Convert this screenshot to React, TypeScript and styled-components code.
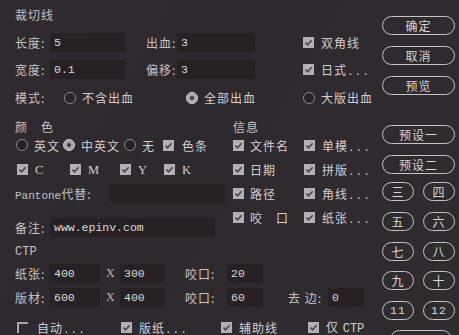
import React from "react";
import styled, { createGlobalStyle } from "styled-components";

const Global = createGlobalStyle`
  html, body { margin: 0; padding: 0; background: #2f2a2f; overflow: hidden; }
  body {
    font-family: "Noto Sans CJK SC", "Noto Sans", sans-serif;
    font-size: 12px;
    color: #cdc9cd;
  }
  * { box-sizing: border-box; }
`;

const Window = styled.div`
  width: 459px;
  height: 335px;
  display: flex;
  overflow: hidden;
  background: linear-gradient(120deg, #312b31 0%, #2e292e 40%, #2f2c30 100%);
`;

const LeftPanel = styled.div`
  width: 382px;
  flex-shrink: 0;
  padding: 6px 0 0 15px;
  display: flex;
  flex-direction: column;
`;

const Title = styled.div`
  height: 18px;
  line-height: 18px;
  letter-spacing: 1px;
  color: #c4c0c4;
`;

const Row = styled.div<{ $mt: number; $h?: number; $pl?: number }>`
  display: flex;
  align-items: center;
  margin-top: ${(p) => p.$mt}px;
  height: ${(p) => p.$h ?? 19}px;
  padding-left: ${(p) => p.$pl ?? 0}px;
  flex-shrink: 0;
`;

const Label = styled.span<{ $w?: number }>`
  width: ${(p) => (p.$w ? `${p.$w}px` : "auto")};
  flex-shrink: 0;
  white-space: nowrap;
  letter-spacing: 1px;
  color: #c6c2c6;
`;

const Mono = styled.span<{ $size?: number }>`
  font-family: "Liberation Mono", monospace;
  font-size: ${(p) => p.$size ?? 11}px;
  letter-spacing: 0;
`;

const Dots = styled.span`
  font-family: "Liberation Mono", monospace;
  font-size: 11px;
  letter-spacing: 1px;
`;

const Gap = styled.span<{ $w: number }>`
  width: ${(p) => p.$w}px;
  flex-shrink: 0;
`;

const Field = styled.div<{ $w: number }>`
  width: ${(p) => p.$w}px;
  height: 19px;
  flex-shrink: 0;
  background: #272125;
  display: flex;
  align-items: center;
  padding-left: 4px;
  font-family: "Liberation Mono", monospace;
  font-size: 11.5px;
  color: #dcd8dc;
`;

const XMark = styled.span`
  width: 20px;
  flex-shrink: 0;
  padding-left: 6px;
  font-family: "Liberation Serif", serif;
  font-size: 12px;
  color: #b9b5b9;
`;

const Option = styled.span<{ $w?: number; $gap?: number }>`
  display: inline-flex;
  align-items: center;
  gap: ${(p) => p.$gap ?? 6}px;
  width: ${(p) => (p.$w ? `${p.$w}px` : "auto")};
  flex-shrink: 0;
  white-space: nowrap;
  letter-spacing: 1px;
  color: #d2ced2;
`;

const Serif = styled.span`
  font-family: "Liberation Serif", serif;
  font-size: 12.5px;
`;

const Box = styled.span<{ $on?: boolean }>`
  width: 11px;
  height: 11px;
  flex-shrink: 0;
  display: inline-flex;
  align-items: center;
  justify-content: center;
  background: ${(p) => (p.$on ? "#b3afb3" : "transparent")};
  border-left: ${(p) => (p.$on ? "none" : "2px solid #a9a5a9")};
  border-top: ${(p) => (p.$on ? "none" : "2px solid #a9a5a9")};
`;

const Radio = styled.span<{ $on?: boolean }>`
  width: 12px;
  height: 12px;
  flex-shrink: 0;
  border-radius: 50%;
  border: 1px solid ${(p) => (p.$on ? "#cbc7cb" : "#8e8a8e")};
  background: ${(p) => (p.$on ? "#aaa6aa" : "#262226")};
  display: inline-flex;
  align-items: center;
  justify-content: center;
  &::after {
    content: "";
    width: 4px;
    height: 4px;
    border-radius: 50%;
    background: ${(p) => (p.$on ? "#3d383d" : "transparent")};
  }
`;

const Check: React.FC<{ on?: boolean; w?: number; gap?: number; children: React.ReactNode }> = ({
  on = true,
  w,
  gap = 7,
  children,
}) => (
  <Option $w={w} $gap={gap}>
    <Box $on={on}>
      {on && (
        <svg width="9" height="9" viewBox="0 0 9 9">
          <path d="M1.5 4.6 L3.6 6.8 L7.6 2.2" fill="none" stroke="#4a454a" strokeWidth="1.6" />
        </svg>
      )}
    </Box>
    <span>{children}</span>
  </Option>
);

const RadioOpt: React.FC<{ on?: boolean; w?: number; children: React.ReactNode }> = ({ on, w, children }) => (
  <Option $w={w} $gap={6}>
    <Radio $on={on} />
    <span>{children}</span>
  </Option>
);

const MidGrid = styled.div`
  display: grid;
  grid-template-columns: 218px 1fr;
  margin-top: 10px;
  flex-shrink: 0;
`;

const Col = styled.div`
  display: flex;
  flex-direction: column;
`;

const ButtonColumn = styled.div`
  display: flex;
  flex-direction: column;
  padding-top: 16px;
`;

const Pill = styled.button<{ $w: number; $mt?: number; $ml?: number }>`
  width: ${(p) => p.$w}px;
  height: 19px;
  margin-top: ${(p) => p.$mt ?? 0}px;
  margin-left: ${(p) => p.$ml ?? 0}px;
  flex-shrink: 0;
  border: 1px solid #c6c2c6;
  border-radius: 10px;
  background: transparent;
  color: #dad6da;
  font-family: "Noto Sans CJK SC", sans-serif;
  font-size: 12px;
  letter-spacing: 1px;
  line-height: 17px;
  padding: 0;
  display: flex;
  align-items: center;
  justify-content: center;
`;

const PillPair = styled.div<{ $mt: number }>`
  display: flex;
  gap: 9px;
  margin-top: ${(p) => p.$mt}px;
`;

const NumText = styled.span`
  font-family: "Liberation Mono", monospace;
  font-size: 11.5px;
`;

export default function App() {
  return (
    <>
      <Global />
      <Window>
        <LeftPanel>
          <Title>裁切线</Title>
          <Row $mt={9}>
            <Label $w={35}>长度:</Label>
            <Field $w={76}>5</Field>
            <Gap $w={20} />
            <Label $w={31}>出血:</Label>
            <Field $w={78}>3</Field>
            <Gap $w={48} />
            <Check>双角线</Check>
          </Row>
          <Row $mt={8}>
            <Label $w={35}>宽度:</Label>
            <Field $w={76}>0.1</Field>
            <Gap $w={20} />
            <Label $w={31}>偏移:</Label>
            <Field $w={78}>3</Field>
            <Gap $w={48} />
            <Check>
              日式<Dots>...</Dots>
            </Check>
          </Row>
          <Row $mt={9}>
            <Label $w={49}>模式:</Label>
            <RadioOpt w={122}>不含出血</RadioOpt>
            <RadioOpt w={117} on>
              全部出血
            </RadioOpt>
            <RadioOpt>大版出血</RadioOpt>
          </Row>
          <MidGrid>
            <Col>
              <Row $mt={0} $h={18}>
                <Label>颜　色</Label>
              </Row>
              <Row $mt={1} $h={18} $pl={1}>
                <RadioOpt w={47}>英文</RadioOpt>
                <RadioOpt w={61} on>
                  中英文
                </RadioOpt>
                <RadioOpt w={39}>无</RadioOpt>
                <Check gap={8}>色条</Check>
              </Row>
              <Row $mt={6} $h={18} $pl={2}>
                <Check w={53}>
                  <Serif>C</Serif>
                </Check>
                <Check w={50}>
                  <Serif>M</Serif>
                </Check>
                <Check w={44}>
                  <Serif>Y</Serif>
                </Check>
                <Check>
                  <Serif>K</Serif>
                </Check>
              </Row>
              <Row $mt={6}>
                <Label $w={95}>
                  <Mono>Pantone</Mono>代替:
                </Label>
                <Field $w={115} />
              </Row>
              <Row $mt={15}>
                <Label $w={35}>备注:</Label>
                <Field $w={165}>www.epinv.com</Field>
              </Row>
            </Col>
            <Col>
              <Row $mt={0} $h={18}>
                <Label>信息</Label>
              </Row>
              <Row $mt={1} $h={18}>
                <Check w={71} gap={6}>文件名</Check>
                <Check gap={7}>
                  单模<Dots>...</Dots>
                </Check>
              </Row>
              <Row $mt={6} $h={18}>
                <Check w={71} gap={6}>日期</Check>
                <Check gap={7}>
                  拼版<Dots>...</Dots>
                </Check>
              </Row>
              <Row $mt={6} $h={18}>
                <Check w={71} gap={6}>路径</Check>
                <Check gap={7}>
                  角线<Dots>...</Dots>
                </Check>
              </Row>
              <Row $mt={6} $h={18}>
                <Check w={71} gap={6}>咬　口</Check>
                <Check gap={7}>
                  纸张<Dots>...</Dots>
                </Check>
              </Row>
            </Col>
          </MidGrid>
          <Row $mt={4} $h={18}>
            <Label>
              <Mono $size={12}>CTP</Mono>
            </Label>
          </Row>
          <Row $mt={5}>
            <Label $w={35}>纸张:</Label>
            <Field $w={50}>400</Field>
            <XMark>X</XMark>
            <Field $w={45}>300</Field>
            <Gap $w={20} />
            <Label $w={42}>咬口:</Label>
            <Field $w={36}>20</Field>
          </Row>
          <Row $mt={5}>
            <Label $w={35}>版材:</Label>
            <Field $w={50}>600</Field>
            <XMark>X</XMark>
            <Field $w={45}>400</Field>
            <Gap $w={20} />
            <Label $w={42}>咬口:</Label>
            <Field $w={36}>60</Field>
            <Gap $w={25} />
            <Label $w={40}>去 边:</Label>
            <Field $w={36}>0</Field>
          </Row>
          <Row $mt={11} $h={18} $pl={2}>
            <Check on={false} w={104} gap={9}>
              自动<Dots>...</Dots>
            </Check>
            <Check w={100}>
              版纸<Dots>...</Dots>
            </Check>
            <Check w={87}>辅助线</Check>
            <Check>
              仅 <Mono $size={12}>CTP</Mono>
            </Check>
          </Row>
        </LeftPanel>
        <ButtonColumn>
          <Pill $w={73}>确定</Pill>
          <Pill $w={73} $mt={11}>
            取消
          </Pill>
          <Pill $w={73} $mt={11}>
            预览
          </Pill>
          <Pill $w={73} $mt={30}>
            预设一
          </Pill>
          <Pill $w={73} $mt={11}>
            预设二
          </Pill>
          <PillPair $mt={8}>
            <Pill $w={32}>三</Pill>
            <Pill $w={32}>四</Pill>
          </PillPair>
          <PillPair $mt={11}>
            <Pill $w={32}>五</Pill>
            <Pill $w={32}>六</Pill>
          </PillPair>
          <PillPair $mt={11}>
            <Pill $w={32}>七</Pill>
            <Pill $w={32}>八</Pill>
          </PillPair>
          <PillPair $mt={10}>
            <Pill $w={32}>九</Pill>
            <Pill $w={32}>十</Pill>
          </PillPair>
          <PillPair $mt={11}>
            <Pill $w={32}>
              <NumText>11</NumText>
            </Pill>
            <Pill $w={32}>
              <NumText>12</NumText>
            </Pill>
          </PillPair>
          <Pill $w={62} $mt={10} $ml={8} aria-label="more" />
        </ButtonColumn>
      </Window>
    </>
  );
}
